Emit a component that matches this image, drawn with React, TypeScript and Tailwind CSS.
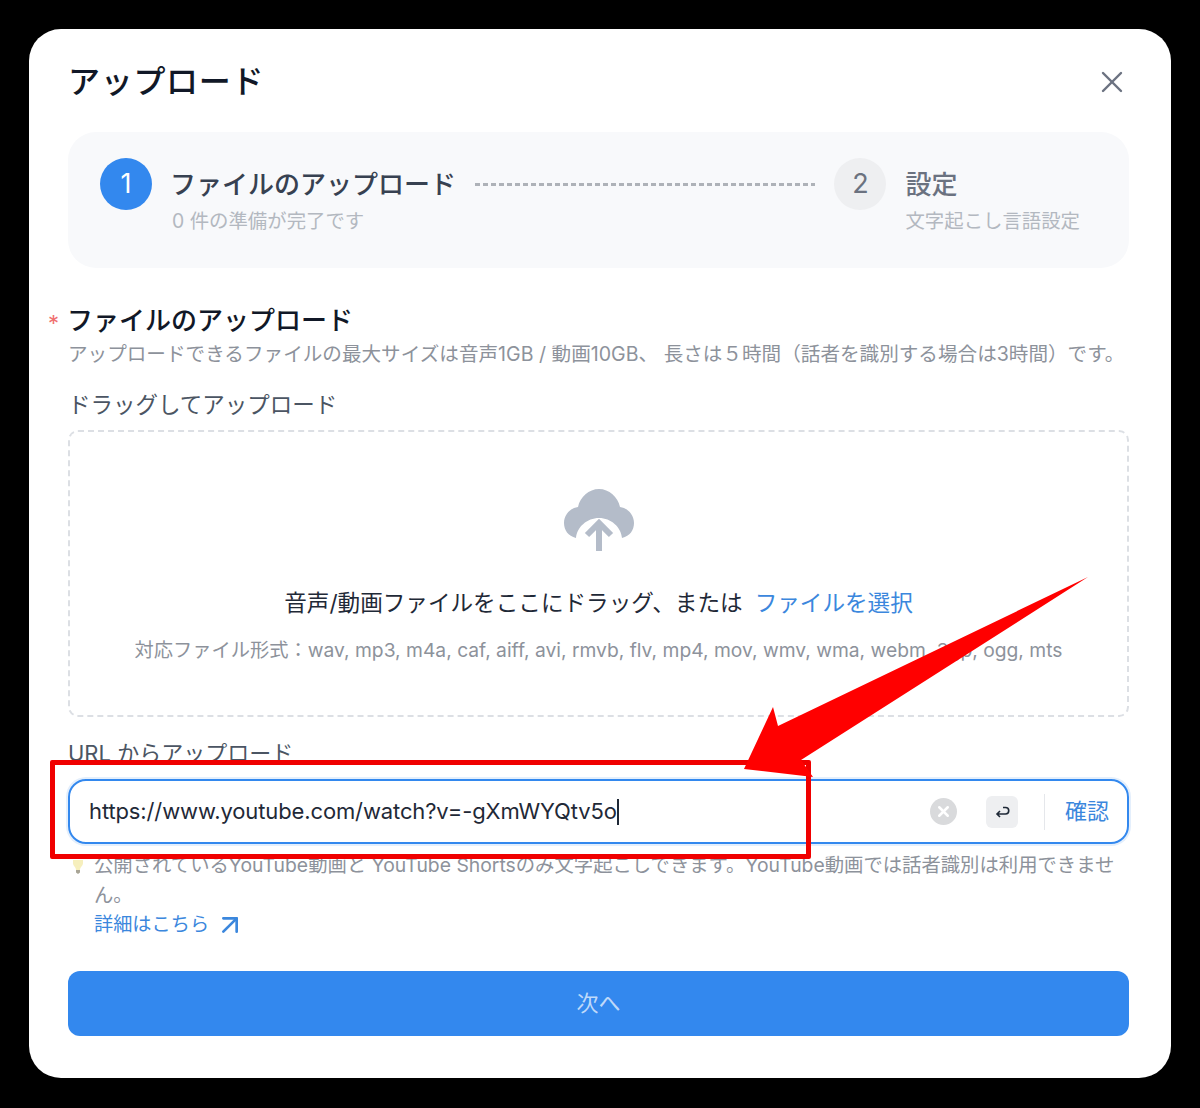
import { X, ArrowUpRight } from "lucide-react"

const font = "font-['Inter','Noto_Sans_CJK_JP',sans-serif]"

function StepBadge({ n, active }: { n: number; active?: boolean }) {
  return (
    <div className={`w-[52px] h-[52px] rounded-full flex items-center justify-center text-[27px] shrink-0 ${active ? "bg-[#3388ee] text-white" : "bg-[#eeeff1] text-[#6b7280]"}`}>
      {n}
    </div>
  )
}

function CloudIcon() {
  return (
    <svg width="70" height="64" viewBox="0 0 70 64">
      <path fill="#b4bcc9" d="M12 49C4 47 0 41 0 34c0-8 6-15 14-16C16 8 25 0 35 0s19 8 21 18c8 1 14 8 14 16 0 7-4 13-12 15-1-11-11-20-23-20S13 38 12 49z" />
      <path fill="none" stroke="#b4bcc9" strokeWidth="6" d="M35 62V37M23 46l12-12 12 12" />
    </svg>
  )
}

export default function App() {
  return (
    <div className={`relative w-[1200px] h-[1108px] bg-black p-[29px] overflow-hidden ${font}`}>
      <div className="w-[1142px] h-[1049px] bg-white rounded-[32px] pl-[39px] pr-[42px] pt-[33px]">
        {/* header */}
        <div className="h-[40px] flex items-center justify-between">
          <h1 className="text-[32px] leading-[40px] font-medium text-[#111827] tracking-[0.7px]">アップロード</h1>
          <X className="w-[36px] h-[36px] text-[#6b7280] mr-[-1px]" strokeWidth={1.6} />
        </div>

        {/* steps */}
        <div className="mt-[30px] h-[136px] bg-[#f8f9fb] rounded-[28px] pl-[32px] pr-[49px] pt-[26px] flex items-start">
          <StepBadge n={1} active />
          <div className="ml-[20px] shrink-0">
            <div className="text-[26px] leading-[54px] font-medium text-[#374151] ml-[-2px]">ファイルのアップロード</div>
            <div className="text-[19.4px] leading-[22px] mt-[-2px] text-[#b3b8c0]">0 件の準備が完了です</div>
          </div>
          <div className="flex-1 mx-[19px] mt-[25px] h-[3px] bg-[repeating-linear-gradient(90deg,#aeb2b8_0,#aeb2b8_5px,transparent_5px,transparent_8px)]" />
          <StepBadge n={2} />
          <div className="ml-[20px] shrink-0">
            <div className="text-[26px] leading-[54px] font-medium text-[#6b7280] ml-[-1px]">設定</div>
            <div className="text-[19.4px] leading-[22px] mt-[-2px] text-[#b3b8c0] ml-[-1px]">文字起こし言語設定</div>
          </div>
        </div>

        {/* file section */}
        <div className="relative mt-[37px] text-[26px] leading-[32px] font-medium text-[#111827] ml-[-1px]">
          <span className="absolute left-[-19px] top-[2px] text-[22px] text-[#f07070] font-normal">*</span>
          ファイルのアップロード
        </div>
        <p className="mt-[3px] text-[19.6px] leading-[28px] text-[#8d929b] whitespace-nowrap">
          アップロードできるファイルの最大サイズは音声1GB / 動画10GB、 長さは５時間（話者を識別する場合は3時間）です。
        </p>

        <div className="mt-[22px] text-[22.5px] leading-[30px] text-[#4b5563]">ドラッグしてアップロード</div>
        <div className="mt-[10px] h-[287px] border-[2px] border-dashed border-[#dcdfe4] rounded-[10px] flex flex-col items-center pt-[57px]">
          <CloudIcon />
          <div className="mt-[34px] text-[22.6px] leading-[31px] text-[#1f2937] whitespace-nowrap">
            音声/動画ファイルをここにドラッグ、または<span className="ml-[12px] text-[#3b87dd]">ファイルを選択</span>
          </div>
          <div className="mt-[19px] text-[19.25px] leading-[26px] text-[#8d929b] whitespace-nowrap">
            対応ファイル形式：wav, mp3, m4a, caf, aiff, avi, rmvb, flv, mp4, mov, wmv, wma, webm, 3gp, ogg, mts
          </div>
        </div>

        {/* url section */}
        <div className="mt-[21px] text-[22px] leading-[30px] text-[#4b5563]">URL からアップロード</div>
        <div className="mt-[11px] h-[65px] rounded-[18px] border-[2px] border-[#3388ee] shadow-[0_0_0_2px_#e4effc] pl-[19px] pr-[18px] flex items-center">
          <span className="text-[22px] text-[#1f2937] tracking-[-0.12px]">https://www.youtube.com/watch?v=-gXmWYQtv5o</span>
          <span className="w-[2px] h-[26px] bg-[#1f2937]" />
          <div className="ml-auto w-[27px] h-[27px] rounded-full bg-[#d9dadc] flex items-center justify-center">
            <X className="w-[17px] h-[17px] text-white" strokeWidth={3.5} />
          </div>
          <div className="ml-[29px] w-[32px] h-[32px] rounded-[6px] bg-[#eeeff1] flex items-center justify-center">
            <svg width="16" height="16" viewBox="0 0 16 16" fill="none" stroke="#1f2937" strokeWidth="1.6">
              <path d="M9 3.5h2.5a3 3 0 0 1 0 6.5H3M6 7l-3 3 3 3" />
            </svg>
          </div>
          <div className="ml-[26px] w-[1px] h-[36px] bg-[#e5e7eb]" />
          <span className="ml-[20px] text-[22px] text-[#3b87dd]">確認</span>
        </div>

        {/* hint */}
        <div className="mt-[7px] flex">
          <svg className="mt-[9px] ml-[5px] shrink-0" width="10" height="14" viewBox="0 0 10 14">
            <path fill="#f6efbd" d="M0 0h10v3C10 6 7 7 7 10H3C3 7 0 6 0 3z" />
            <path fill="#a9a596" d="M3 10h4v2.5L5 14l-2-1.500z" />
          </svg>
          <div className="ml-[11px] text-[19.35px] leading-[29.5px] text-[#8d929b]">
            公開されているYouTube動画と YouTube Shortsのみ文字起こしできます。YouTube動画では話者識別は利用できません。
            <div className="flex items-center text-[#3b87dd] text-[19.2px]">
              詳細はこちら
              <ArrowUpRight className="ml-[5px] w-[32px] h-[32px] my-[-2px]" strokeWidth={2} />
            </div>
          </div>
        </div>

        <button className="mt-[31px] w-full h-[65px] rounded-[12px] bg-[#3388ee] text-white/70 text-[22px]">次へ</button>
      </div>

      {/* red annotation */}
      <div className="absolute left-[50px] top-[760px] w-[761px] h-[99px] border-[5px] border-[#f00000] rounded-[2px]" />
      <svg className="absolute left-0 top-0 pointer-events-none" width="1200" height="1108" viewBox="0 0 1200 1108">
        <polygon fill="#ff0000" points="1088,577 778,726 773,707 744,769 813,777 801,760" />
      </svg>
    </div>
  )
}
